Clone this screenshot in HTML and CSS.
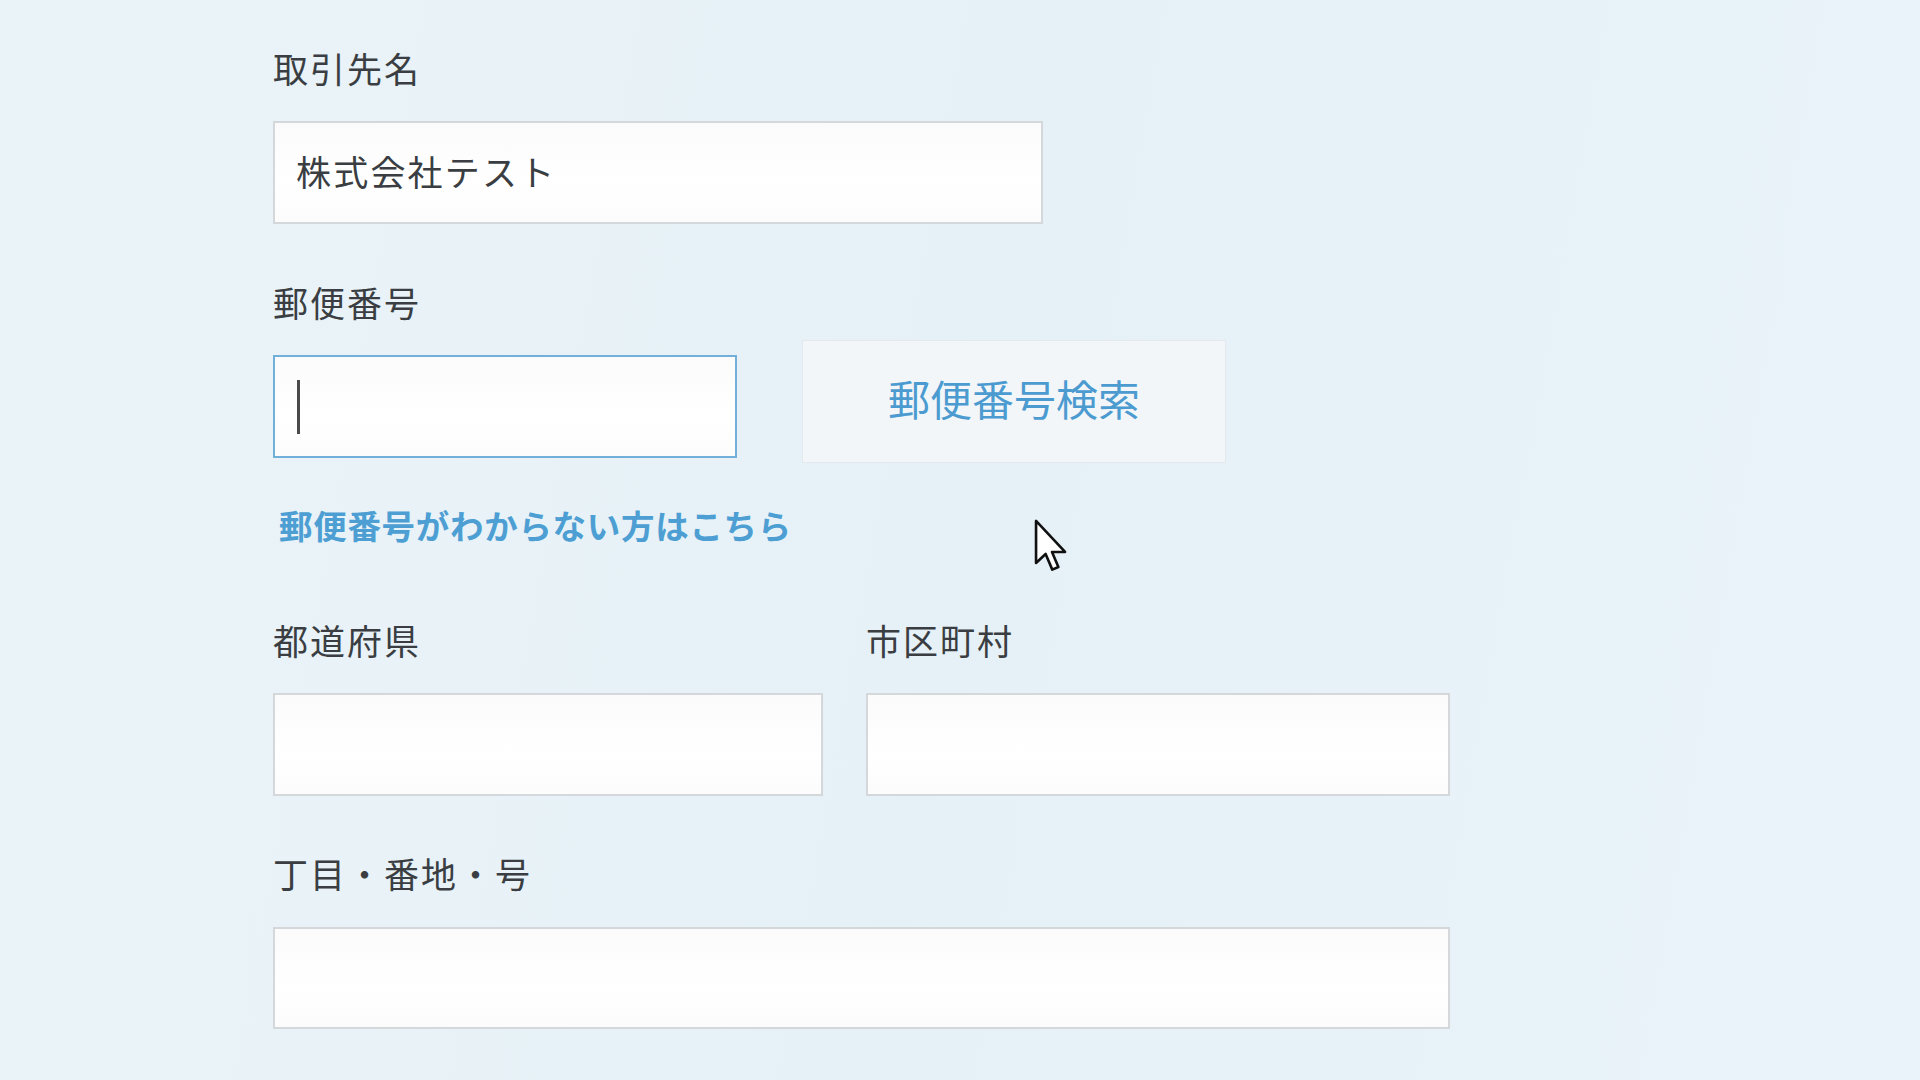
FILE: index.html
```html
<!DOCTYPE html>
<html lang="ja">
<head>
<meta charset="utf-8">
<title>取引先登録</title>
<link rel="stylesheet" href="styles.css">
</head>
<body>
<main class="form">
  <div class="label label-first">取引先名</div>
  <div class="field field-name"><span class="value">株式会社テスト</span></div>

  <div class="label label-gap">郵便番号</div>
  <div class="zip-row">
    <div class="field field-zip focused"><span class="caret"></span></div>
    <div class="btn-search">郵便番号検索</div>
  </div>
  <a class="zip-link">郵便番号がわからない方はこちら</a>

  <div class="pair">
    <div class="col">
      <div class="label">都道府県</div>
      <div class="field"></div>
    </div>
    <div class="col">
      <div class="label">市区町村</div>
      <div class="field"></div>
    </div>
  </div>

  <div class="label label-gap2">丁目・番地・号</div>
  <div class="field field-wide"></div>
</main>

<svg class="pointer" width="38" height="58" viewBox="0 0 13 20" aria-hidden="true">
  <path d="M1 1 L1 15.5 L4.3 12.4 L6.6 17.8 L8.7 16.9 L6.5 11.7 L11 11.7 Z" fill="#ffffff" stroke="#111" stroke-width="0.9" stroke-linejoin="round"/>
</svg>
</body>
</html>
```

FILE: styles.css
```css
html, body {
  margin: 0;
  padding: 0;
  width: 1920px;
  height: 1080px;
  overflow: hidden;
}
body {
  background: linear-gradient(100deg, #eaf3f8 0%, #e6f1f7 50%, #e9f3f9 100%);
  font-family: "Noto Sans CJK JP", "Noto Sans", sans-serif;
  color: #363b3f;
  position: relative;
}
.form {
  padding: 48px 0 0 273px;
  display: flex;
  flex-direction: column;
  align-items: flex-start;
}
.label {
  font-size: 35px;
  line-height: 40px;
  height: 44px;
  color: #3a3e42;
  letter-spacing: 2px;
  margin-bottom: 29px;
}
.label-gap { margin-top: 58px; margin-bottom: 14px; }
.label-gap2 { margin-top: 57px; margin-bottom: 30px; }
.field {
  box-sizing: border-box;
  height: 103px;
  background: linear-gradient(180deg, #fbfbfb 0%, #ffffff 60%, #fcfcfc 100%);
  border: 2px solid #d4d8db;
  display: flex;
  align-items: center;
  padding-left: 21px;
}
.field-name { width: 770px; }
.value {
  font-size: 35px;
  color: #3a3e42;
  letter-spacing: 2.2px;
  margin-top: -4px;
}
.zip-row {
  display: flex;
  align-items: flex-start;
  gap: 65px;
}
.field-zip {
  width: 464px;
  margin-top: 15px;
  border-color: #72b0da;
  padding-left: 22px;
}
.caret {
  display: block;
  width: 3px;
  height: 54px;
  background: #4a4a4a;
}
.btn-search {
  box-sizing: border-box;
  width: 424px;
  height: 123px;
  background: #f2f6f9;
  border: 1px solid #e3e9ed;
  display: flex;
  align-items: center;
  justify-content: center;
  font-size: 42px;
  color: #4c9bd0;
  padding-bottom: 9px;
}
.zip-link {
  margin-top: 42px;
  margin-left: 6px;
  font-size: 33.5px;
  line-height: 40px;
  height: 44px;
  font-weight: 700;
  letter-spacing: 0.7px;
  color: #4d9fd3;
  text-decoration: none;
  cursor: pointer;
}
.pair {
  margin-top: 71px;
  display: grid;
  grid-template-columns: 550px 584px;
  column-gap: 43px;
}
.col {
  display: flex;
  flex-direction: column;
}
.col .field { width: 100%; }
.field-wide { width: 1177px; height: 102px; }
.pointer {
  position: absolute;
  left: 1033px;
  top: 518px;
}
```
